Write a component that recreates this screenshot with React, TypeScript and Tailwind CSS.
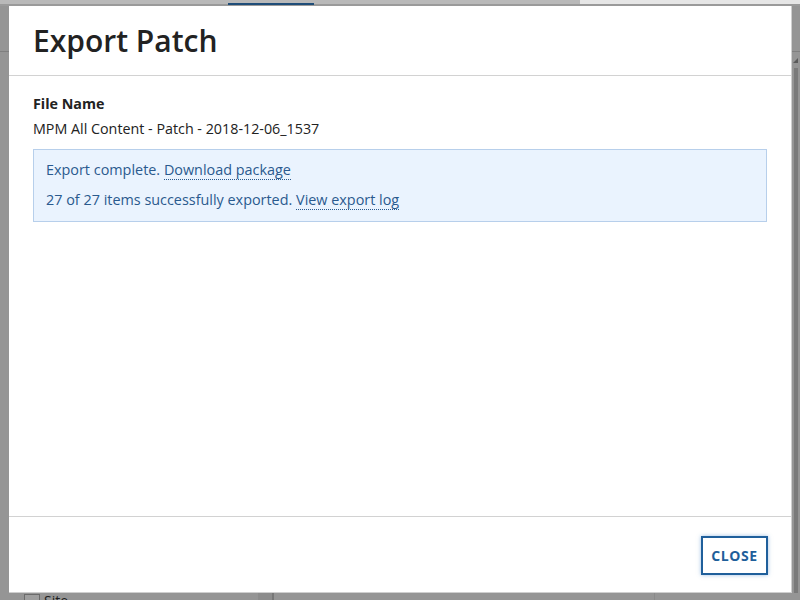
import React from 'react';

const font = { fontFamily: '"Open Sans", "Noto Sans", sans-serif' };

const App: React.FC = () => {
  return (
    <div className="relative w-[800px] h-[600px] overflow-hidden bg-[#959595]" style={font}>
      {/* Dimmed page behind the dialog */}
      <div className="flex flex-col h-full">
        <div className="flex h-[4px]">
          <div className="w-[580px] bg-[#b9b9b9] relative">
            <div className="absolute left-[228px] top-[3px] w-[86px] h-[2px] bg-[#1f4d78]" />
          </div>
          <div className="flex-1 bg-[#e6e6e6]" />
        </div>
        <div className="h-[2px] bg-[#9a9a9a]" />
        <div className="h-[45px]" />
        <div className="h-px bg-[#7f7f7f]" />
        <div className="flex-1 flex justify-end">
          <div className="w-[8px] flex flex-col pt-[6px]">
            <div className="ml-[1px] w-0 h-0 border-l-[5px] border-l-transparent border-b-[5px] border-b-[#5a5a5a]" />
            <div className="mt-[5px] ml-[2px] w-[4px] flex-1 bg-[#7a7a7a]" />
          </div>
        </div>
        <div className="h-[7px] flex items-start">
          <div className="ml-[24px] mt-[1px] w-[16px] h-[16px] border border-[#6b6b6b] bg-[#9e9e9e]" />
          <span className="ml-[4px] text-[14px] leading-[16px] text-[#1e1e1e]">Site</span>
          <div className="ml-[190px] w-[16px] h-full bg-[#8c8c8c] border-r-2 border-[#777]" />
          <div className="ml-[380px] w-px h-full bg-[#8a8a8a]" />
        </div>
      </div>

      {/* Dialog */}
      <div className="absolute left-[9px] top-[6px] w-[783px] h-[587px] bg-white border border-[#cfcfcf] border-l-0 border-t-0 flex flex-col">
        <div className="h-[70px] flex items-center px-[24px] border-b border-[#d2d2d2]">
          <h1 className="text-[30px] font-semibold text-[#222] leading-none mt-[1px]">Export Patch</h1>
        </div>
        <div className="flex-1 px-[24px] pt-[18px]">
          <div className="text-[14.3px] font-bold text-[#222] leading-[20px]">File Name</div>
          <div className="mt-[5px] text-[14.3px] text-[#222] leading-[20px]">MPM All Content - Patch - 2018-12-06_1537</div>
          <div className="mt-[10px] bg-[#eaf3fe] border border-[#b7cfeb] px-[12px] pt-[10px] pb-[11px] text-[14.4px] text-[#2a5a8e] leading-[20px]">
            <div>
              Export complete.{' '}
              <a className="border-b border-dotted border-[#2a5a8e]">Download package</a>
            </div>
            <div className="mt-[10px]">
              27 of 27 items successfully exported.{' '}
              <a className="border-b border-dotted border-[#2a5a8e]">View export log</a>
            </div>
          </div>
        </div>
        <div className="h-[76px] border-t border-[#d2d2d2] flex items-center justify-end px-[23px]">
          <button className="w-[67px] h-[39px] mt-[1px] border-2 border-[#1f5f9b] text-[#1f5f9b] text-[14px] font-bold tracking-[0.6px] shadow-[0_0_4px_rgba(60,130,200,0.5)] bg-white">
            CLOSE
          </button>
        </div>
      </div>
    </div>
  );
};

export default App;
